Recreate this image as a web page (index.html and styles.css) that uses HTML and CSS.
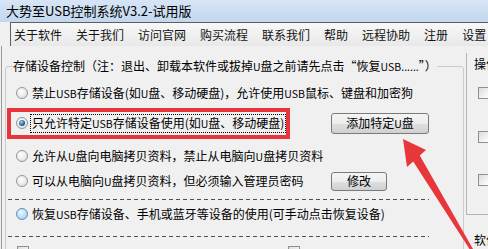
FILE: index.html
```html
<!DOCTYPE html>
<html lang="zh-CN">
<head>
<meta charset="utf-8">
<title>大势至USB控制系统V3.2-试用版</title>
<link rel="stylesheet" href="styles.css">
</head>
<body>
<div class="win">
  <div class="titlebar">大势至USB控制系统V3.2-试用版</div>
  <div class="menubar">
    <span>关于软件</span><span>关于我们</span><span>访问官网</span><span>购买流程</span><span>联系我们</span><span>帮助</span><span>远程协助</span><span>注册</span><span>设置</span>
  </div>
  <div class="content">
    <fieldset class="group">
      <legend>存储设备控制（注：退出、卸载本软件或拔掉<span class="en">U</span>盘之前请先点击“恢复<span class="en">USB......</span>”）</legend>
      <div class="row r1"><span class="radio"></span><span>禁止<span class="en">USB</span>存储设备(如<span class="en">U</span>盘、移动硬盘)，允许使用<span class="en">USB</span>鼠标、键盘和加密狗</span></div>
      <div class="row r2 withbtn">
        <div class="cell"><span class="radio on"></span><span class="focus">只允许特定<span class="en">USB</span>存储设备使用(如<span class="en">U</span>盘、移动硬盘)</span></div>
        <button class="btn wide">添加特定<span class="en">U</span>盘</button>
        <div class="redbox"></div>
      </div>
      <div class="row r3"><span class="radio"></span><span>允许从<span class="en">U</span>盘向电脑拷贝资料，禁止从电脑向<span class="en">U</span>盘拷贝资料</span></div>
      <div class="row r4 withbtn">
        <div class="cell"><span class="radio"></span><span>可以从电脑向<span class="en">U</span>盘拷贝资料，但必须输入管理员密码</span></div>
        <button class="btn narrow">修改</button>
      </div>
      <div class="dash d1"></div>
      <div class="row r5"><span class="radio hover"></span><span>恢复<span class="en">USB</span>存储设备、手机或蓝牙等设备的使用(可手动点击恢复设备)</span></div>
      <div class="dash d2"></div>
      <div class="row r6">
        <div class="cell"><span class="check"></span><span>禁止手机、平板电脑等</span></div>
        <div class="cell"><span class="check"></span><span>禁止蓝牙设备</span></div>
      </div>
    </fieldset>
    <div class="side">
      <div class="side-top">
        <div class="side-label">操作</div>
        <span class="check c1"></span>
        <span class="check c2"></span>
        <span class="check c3"></span>
      </div>
      <div class="side-bottom">软件</div>
    </div>
  </div>
  <svg class="arrow" width="488" height="249" viewBox="0 0 488 249">
    <polygon points="403,139 426,150 419.8,155.5 473,249 469.5,249 413.2,161.5 407,167" fill="#e8373b"/>
  </svg>
</div>
</body>
</html>
```
FILE: styles.css
```css
* { box-sizing: border-box; }
html, body { margin: 0; padding: 0; }
body {
  width: 488px;
  height: 249px;
  overflow: hidden;
  background: #f0f0f0;
  font-family: "Noto Sans CJK SC", "Noto Sans", sans-serif;
  font-size: 12px;
  color: #000;
}
.win {
  position: relative;
  width: 488px;
  height: 249px;
  overflow: hidden;
}
.en { font-size: 10.5px; }
.titlebar {
  height: 22px;
  padding-left: 6px;
  font-size: 13px;
  line-height: 22px;
  white-space: nowrap;
  background: linear-gradient(#d6e5f6, #c3d7ee);
}
.menubar {
  margin-left: 10px;
  height: 24px;
  border-top: 1px solid #5e5e5e;
  border-left: 1px solid #5e5e5e;
  background: linear-gradient(#f8f8f8, #e8e8e8);
  display: flex;
  align-items: center;
  gap: 14px;
  padding-left: 3px;
  line-height: 16px;
  white-space: nowrap;
  color: #111;
}
.content {
  display: flex;
  align-items: flex-start;
  margin-left: 1px;
  border-left: 1px solid #9a9a9a;
  height: 203px;
}
.group {
  margin: 12px 0 0 3px;
  width: 459px;
  min-width: 0;
  height: 220px;
  padding: 0;
  border: 1px solid #c9cdd2;
  border-radius: 3px;
  flex: none;
}
.group legend {
  margin-left: 7px;
  padding: 0;
  line-height: 16px;
  white-space: nowrap;
}
.row {
  display: flex;
  align-items: center;
  gap: 4px;
  height: 24px;
  padding-left: 10px;
  line-height: 16px;
  white-space: nowrap;
}
.row.withbtn {
  display: grid;
  grid-template-columns: 311px auto;
  justify-items: start;
}
.cell {
  display: flex;
  align-items: center;
  gap: 4px;
}
.r1 { margin-top: 6px; }
.r2 { margin-top: 6px; position: relative; }
.r3 { margin-top: 9px; }
.r4 { margin-top: 1px; }
.r5 { margin-top: 2px; }
.r6 {
  margin-top: 11px;
  padding-left: 11px;
  align-items: flex-start;
  display: grid;
  grid-template-columns: 267px auto;
}
.r6 .cell { align-items: flex-start; }
.r6 .check { margin-top: -2px; }
.dash {
  margin-left: 2px;
  width: 421px;
  height: 1px;
  background: repeating-linear-gradient(90deg, #4e4e4e 0 4px, transparent 4px 7px);
}
.d1 { margin-top: 6px; }
.d2 { margin-top: 10px; }
.focus {
  outline: 1px dotted #000;
  padding: 0 1px;
  margin-left: -1px;
}
.redbox {
  position: absolute;
  left: 1px;
  top: -3px;
  width: 283px;
  height: 31px;
  border: 4px solid #e8343a;
  pointer-events: none;
}
.radio {
  position: relative;
  flex: none;
  width: 12px;
  height: 12px;
  border-radius: 50%;
  border: 1px solid #949494;
  background: radial-gradient(circle at 40% 35%, #ffffff, #e6e6e6 65%, #d2d2d2);
}
.radio.on::after {
  content: "";
  position: absolute;
  left: 2px;
  top: 2px;
  width: 6px;
  height: 6px;
  border-radius: 50%;
  background: radial-gradient(circle at 40% 35%, #9fd0f5, #245d96 60%, #14406e);
}
.radio.hover {
  border-color: #5d8fbf;
  background: radial-gradient(circle at 40% 35%, #eef8fe, #a8d4f3 75%, #8cc0e8);
}
.check {
  display: block;
  flex: none;
  width: 12px;
  height: 12px;
  border: 1px solid #8e8f8f;
  background: linear-gradient(135deg, #dcdcdc, #ffffff);
}
.btn {
  font: inherit;
  color: #000;
  padding: 0;
  border: 1px solid #7a7a7a;
  border-radius: 3px;
  background: linear-gradient(#f5f5f5 0%, #ececec 50%, #dfdfdf 51%, #d0d0d0 100%);
  line-height: 16px;
}
.btn.wide { width: 98px; height: 21px; }
.btn.narrow { width: 56px; height: 19px; }
.side {
  margin-top: 7px;
  margin-left: 2px;
  flex: 1;
}
.side-top {
  height: 162px;
  border-left: 1px solid #b4b4b4;
  border-bottom: 1px solid #b4b4b4;
  padding-left: 7px;
  padding-top: 3px;
}
.side-label {
  line-height: 16px;
  white-space: nowrap;
}
.side-top .check { margin-left: 4px; }
.c1 { margin-top: 15px; }
.c2 { margin-top: 32px; }
.c3 { margin-top: 31px; }
.side-bottom {
  margin-top: 17px;
  padding-left: 8px;
  line-height: 16px;
  white-space: nowrap;
}
.arrow {
  position: absolute;
  left: 0;
  top: 0;
  pointer-events: none;
}
```
